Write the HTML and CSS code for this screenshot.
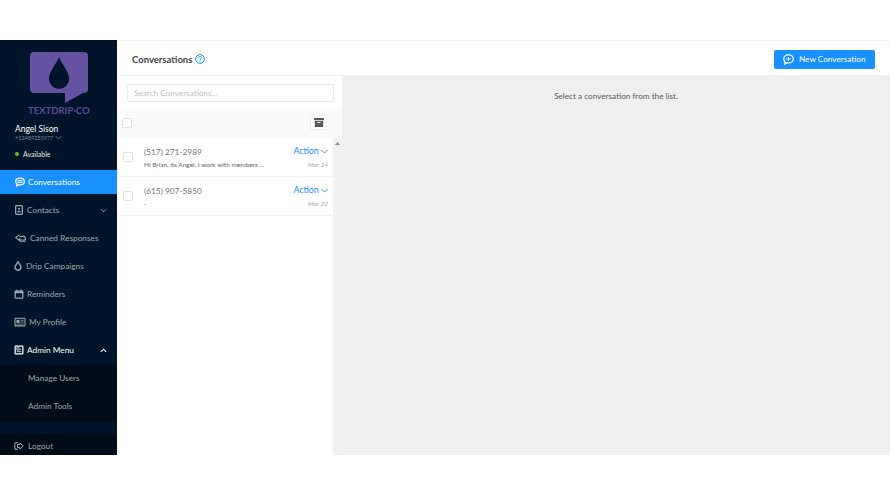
FILE: index.html
```html
<!DOCTYPE html>
<html lang="en">
<head>
<meta charset="utf-8">
<title>Conversations</title>
<link rel="stylesheet" href="styles.css">
</head>
<body>
<div class="app">
  <aside class="sidebar">
    <div class="logo">
      <svg class="logo-mark" width="58" height="52" viewBox="0 0 58 52">
        <path fill="#6552a3" d="M4 0H54a4 4 0 0 1 4 4V37a4 4 0 0 1-4 4H53L35 51V41H4a4 4 0 0 1-4-4V4a4 4 0 0 1 4-4Z"/>
        <path fill="#001529" d="M29 5C32 13 39 19 39 27a10 10 0 0 1-20 0C19 19 26 13 29 5Z"/>
      </svg>
      <div class="logo-text">TEXTDRIP·CO</div>
    </div>
    <div class="user">
      <div class="user-name">Angel Sison</div>
      <div class="user-phone">+12489235977 <svg width="7" height="5" viewBox="0 0 7 5"><path d="M.5 1l3 3 3-3" fill="none" stroke="#7f8c9a" stroke-width=".8"/></svg></div>
    </div>
    <div class="status"><span class="status-dot"></span>Available</div>
    <nav class="menu">
      <a class="item active">
        <svg class="ico ico-chat" viewBox="0 0 12 12"><path d="M6 1.200C3 1.200.8 3 .8 5.300c0 1.200.6 2.200 1.600 3L2 10.600l2.600-1.300c.5.100.9.100 1.400.100 3 0 5.200-1.800 5.200-4.100S9 1.200 6 1.200Z" fill="none" stroke="currentColor" stroke-width="1.500"/><path d="M3 4.500h6M3 6.500h6" stroke="currentColor" stroke-width="1.200"/></svg>
        <span>Conversations</span>
      </a>
      <a class="item">
        <svg class="ico" viewBox="0 0 12 12"><rect x="2" y=".8" width="8" height="10.400" rx="1" fill="none" stroke="currentColor" stroke-width="1.500"/><circle cx="6" cy="4.500" r="1.300" fill="currentColor"/><path d="M3.800 8.800c.2-1.300 1-1.800 2.200-1.800s2 .5 2.200 1.800Z" fill="currentColor"/></svg>
        <span>Contacts</span>
        <svg class="chev" viewBox="0 0 8 5"><path d="M1 1l3 3 3-3" fill="none" stroke="currentColor" stroke-width="1"/></svg>
      </a>
      <a class="item">
        <svg class="ico ico-wide" viewBox="0 0 14 12"><path d="M5.500 2 1 5.500 5.500 9V7H7M5.500 4H10c2 0 3.300 1 3.300 3v1.500" fill="none" stroke="currentColor" stroke-width="1.500"/><circle cx="8" cy="9.500" r="1.400" fill="none" stroke="currentColor" stroke-width="1.200"/><circle cx="11.500" cy="9.500" r="1.400" fill="none" stroke="currentColor" stroke-width="1.200"/></svg>
        <span>Canned Responses</span>
      </a>
      <a class="item">
        <svg class="ico ico-narrow" viewBox="0 0 9 12"><path d="M4.500 1C5.600 3.400 8 5 8 7.600a3.500 3.500 0 0 1-7 0C1 5 3.400 3.400 4.500 1Z" fill="none" stroke="currentColor" stroke-width="1.600"/></svg>
        <span>Drip Campaigns</span>
      </a>
      <a class="item">
        <svg class="ico" viewBox="0 0 12 12"><rect x="1.400" y="2.400" width="9.200" height="8.400" rx=".8" fill="none" stroke="currentColor" stroke-width="1.500"/><path d="M1.400 4.200h9.200" stroke="currentColor" stroke-width="1.800"/><path d="M3.600 .6v2.400M8.400 .6v2.400" stroke="currentColor" stroke-width="1.300"/></svg>
        <span>Reminders</span>
      </a>
      <a class="item">
        <svg class="ico ico-card" viewBox="0 0 14 12"><rect x="1" y="1.400" width="12" height="9.200" rx=".8" fill="none" stroke="currentColor" stroke-width="1.300"/><rect x="2.800" y="3.400" width="3.600" height="3.800" fill="currentColor"/><path d="M7.600 4h3.800M7.600 6h3.800M2.800 8.500h8.600" stroke="currentColor" stroke-width=".9"/></svg>
        <span>My Profile</span>
      </a>
      <a class="item bright">
        <svg class="ico" viewBox="0 0 12 12"><rect x="1.400" y="1.400" width="9.200" height="9.200" rx=".8" fill="none" stroke="currentColor" stroke-width="1.500"/><rect x="3.400" y="3.400" width="2.600" height="2.600" fill="none" stroke="currentColor" stroke-width=".9"/><path d="M6.800 5.200h1.800M3.400 8h5.200" stroke="currentColor" stroke-width="1"/></svg>
        <span>Admin Menu</span>
        <svg class="chev" viewBox="0 0 8 5"><path d="M1 4l3-3 3 3" fill="none" stroke="currentColor" stroke-width="1.300"/></svg>
      </a>
      <div class="submenu">
        <a class="subitem">Manage Users</a>
        <a class="subitem">Admin Tools</a>
      </div>
    </nav>
    <a class="logout">
      <svg class="ico" viewBox="0 0 12 12"><path d="M4.500 2H2.200C1.500 2 1 2.500 1 3.200v5.600C1 9.500 1.500 10 2.200 10H4.500" fill="none" stroke="currentColor" stroke-width="1.300"/><path d="M7 2.300 11.200 6 7 9.700V7.700H4.200V4.300H7Z" fill="none" stroke="currentColor" stroke-width="1.200"/></svg>
      <span>Logout</span>
    </a>
  </aside>
  <main class="main">
    <header class="topbar">
      <div class="title">Conversations
        <svg class="help" width="10" height="10" viewBox="0 0 11 11"><circle cx="5.500" cy="5.500" r="4.800" fill="none" stroke="#1890ff" stroke-width="1.100"/><path d="M3.900 4.300c0-1 .7-1.500 1.600-1.500s1.600.6 1.600 1.400c0 1.200-1.600 1.200-1.600 2.400" fill="none" stroke="#1890ff" stroke-width="1"/><circle cx="5.500" cy="8" r=".7" fill="#1890ff"/></svg>
      </div>
      <button class="primary" type="button">
        <svg width="11" height="11" viewBox="0 0 12 12"><path d="M6 1C3 1 .8 3 .8 5.400c0 1.200.6 2.300 1.500 3L2 10.800l2.700-1.200c.4.100.8.100 1.300.100 3 0 5.200-1.900 5.200-4.300S9 1 6 1Z" fill="none" stroke="#fff" stroke-width="1.400"/><path d="M3.500 5.400h5M6 3.400v4" stroke="#fff" stroke-width="1.100"/></svg>
        New Conversation
      </button>
    </header>
    <div class="content">
      <section class="list">
        <div class="search-wrap"><div class="search">Search Conversations...</div></div>
        <div class="toolbar">
          <span class="check"></span>
          <span class="archive">
            <svg width="10" height="9" viewBox="0 0 11 10"><path fill="#595959" d="M0 0h11v2.600H0ZM.8 3.400h9.400V10H.8Z"/><path d="M3.800 5h3.400" stroke="#fff" stroke-width="1"/></svg>
          </span>
        </div>
        <div class="rows">
          <div class="scroll-list">
            <div class="row">
              <span class="check"></span>
              <div class="row-main">
                <div class="phone">(517) 271-2989</div>
                <div class="preview">Hi Brian, its Angel. I work with members ...</div>
              </div>
              <div class="row-side">
                <div class="action">Action <svg width="7" height="5" viewBox="0 0 7 5"><path d="M.5 1l3 3 3-3" fill="none" stroke="#1890ff" stroke-width=".9"/></svg></div>
                <div class="date">Mar 24</div>
              </div>
            </div>
            <div class="row">
              <span class="check"></span>
              <div class="row-main">
                <div class="phone">(615) 907-5850</div>
                <div class="preview">-</div>
              </div>
              <div class="row-side">
                <div class="action">Action <svg width="7" height="5" viewBox="0 0 7 5"><path d="M.5 1l3 3 3-3" fill="none" stroke="#1890ff" stroke-width=".9"/></svg></div>
                <div class="date">Mar 22</div>
              </div>
            </div>
          </div>
          <div class="scrollbar"><svg width="5" height="3" viewBox="0 0 5 3"><path d="M0 3 2.500 0 5 3Z" fill="#8c8c8c"/></svg></div>
        </div>
      </section>
      <section class="detail">Select a conversation from the list.</section>
    </div>
  </main>
</div>
</body>
</html>
```
FILE: styles.css
```css
* { box-sizing: border-box; }
html, body { margin: 0; height: 100%; background: #fff; }
body {
  padding: 40px 0 45px;
  font-family: Lato, "Open Sans", "Liberation Sans", sans-serif;
  overflow: hidden;
}
.app { display: flex; height: 415px; }

.sidebar {
  width: 117px;
  flex: none;
  background: #001529;
  display: flex;
  flex-direction: column;
  color: rgba(255,255,255,.62);
  font-size: 8.300px;
}
.logo { padding: 12px 0 0 30px; height: 81px; }
.logo-mark { display: block; }
.logo-text {
  margin: 1px 0 0 -2px;
  font-size: 9.500px;
  font-weight: 700;
  line-height: 12px;
  color: #5f4c9d;
  white-space: nowrap;
}
.user { padding: 2px 0 0 15px; height: 21px; }
.user-name { color: #fff; font-size: 8.500px; line-height: 12px; }
.user-phone { font-size: 5.500px; line-height: 5px; color: #7f8c9a; white-space: nowrap; }
.status {
  display: flex;
  align-items: center;
  margin: 5px 0 0 15px;
  height: 14px;
  font-size: 7px;
  color: #e6e6e6;
}
.status-dot { width: 4px; height: 4px; border-radius: 50%; background: #52c41a; margin-right: 4px; }
.menu { margin-top: 9px; }
.item {
  display: flex;
  align-items: center;
  height: 24px;
  margin-bottom: 4px;
  padding-left: 14px;
  line-height: 12px;
  white-space: nowrap;
}
.item.active { background: #1890ff; color: #fff; }
.item.bright { color: #fff; }
.ico { width: 10px; height: 10px; flex: none; margin-right: 3px; }
.ico-chat { margin-left: 1px; margin-right: 3px; }
.ico-wide { width: 11px; margin-left: 1px; margin-right: 4px; }
.ico-narrow { width: 8px; margin-right: 4px; }
.ico-card { width: 12px; margin-right: 3px; }
.chev { width: 7px; height: 5px; margin-left: auto; margin-right: 10px; }
.submenu { background: #000c17; margin-top: -1px; height: 57px; padding-top: 1px; }
.subitem { display: flex; align-items: center; height: 24px; margin-bottom: 4px; padding-left: 28px; }
.logout {
  display: flex;
  align-items: center;
  margin-top: auto;
  height: 21px;
  padding: 3px 0 0 14px;
  background: #000c17;
}
.logout .ico { margin-right: 4px; }

.main { flex: 1; min-width: 0; display: flex; flex-direction: column; }
.topbar {
  height: 36px;
  flex: none;
  display: flex;
  align-items: center;
  justify-content: space-between;
  padding: 2px 15px 0;
  border-top: 1px solid #f0f0f0;
  border-bottom: 1px solid #f0f0f0;
}
.title { font-size: 9.500px; font-weight: 700; color: #444; display: flex; align-items: center; gap: 3px; }
.primary {
  display: flex;
  align-items: center;
  gap: 5px;
  height: 19px;
  width: 101px;
  padding: 0 0 0 9px;
  border: 0;
  border-radius: 2px;
  background: #1890ff;
  color: #fff;
  font: 8.200px Lato, "Open Sans", sans-serif;
  white-space: nowrap;
}
.content { flex: 1; display: flex; min-height: 0; }
.list { width: 225px; flex: none; display: flex; flex-direction: column; background: #fff; }
.search-wrap { padding: 8px 8px 7px 10px; height: 33px; }
.search {
  height: 18px;
  width: 207px;
  border: 1px solid #e8e8e8;
  border-radius: 2px;
  padding-left: 6px;
  font-size: 8.200px;
  line-height: 16px;
  color: #bfbfbf;
}
.toolbar {
  height: 29px;
  background: #fafafa;
  display: flex;
  align-items: center;
  justify-content: space-between;
  padding: 0 15px 2px 5px;
  flex: none;
}
.check {
  width: 10px;
  height: 10px;
  flex: none;
  border: 1px solid #e3e3e3;
  border-radius: 2px;
  background: #fff;
}
.archive {
  width: 17px;
  height: 15px;
  border: 1px solid #ececec;
  border-radius: 2px;
  background: #fff;
  display: flex;
  align-items: center;
  justify-content: center;
}
.rows { flex: 1; display: flex; min-height: 0; }
.scroll-list { width: 216px; flex: none; }
.scrollbar { width: 9px; background: #f1f1f1; display: flex; justify-content: center; align-items: flex-start; padding-top: 4px; }
.scrollbar svg { display: block; }
.row {
  display: flex;
  align-items: center;
  height: 39px;
  padding: 0 5px 0 6px;
  border-bottom: 1px solid #f0f0f0;
}
.row-main { flex: 1; min-width: 0; margin-left: 11px; padding-top: 1px; }
.phone { font-size: 8.300px; line-height: 12px; color: #767676; }
.preview { font-size: 6.500px; line-height: 10px; margin-top: 2px; color: #666; white-space: nowrap; }
.row-side { text-align: right; }
.action { font-size: 8.800px; line-height: 12px; color: #1890ff; }
.date { font-size: 6.500px; line-height: 9px; font-style: italic; color: #a6a6a6; margin-top: 3px; }
.detail {
  flex: 1;
  background: #efefef;
  text-align: center;
  padding-top: 14px;
  font-size: 8.200px;
  line-height: 12px;
  color: #595959;
}
```
